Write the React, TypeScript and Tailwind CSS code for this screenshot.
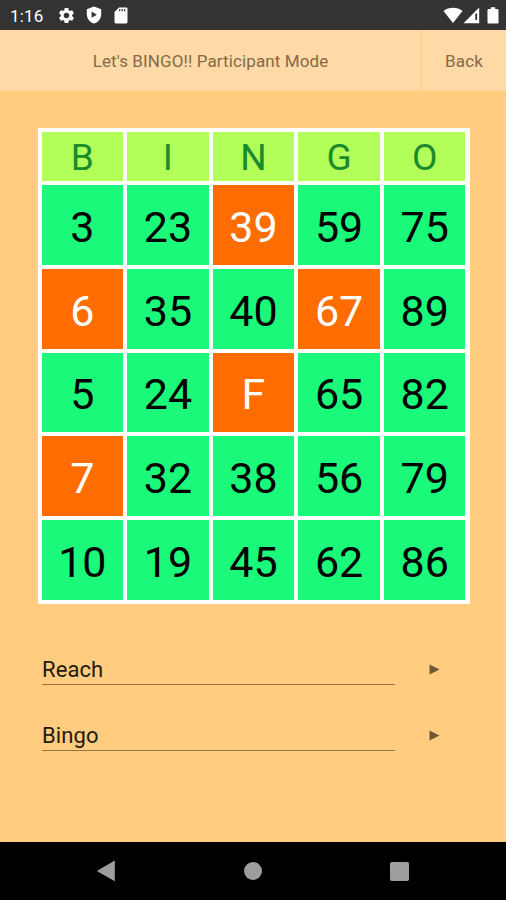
import React from "react";

type CellData = {
  label: string;
  hit?: boolean;
};

const HEADERS = ["B", "I", "N", "G", "O"];

const ROWS: CellData[][] = [
  [{ label: "3" }, { label: "23" }, { label: "39", hit: true }, { label: "59" }, { label: "75" }],
  [{ label: "6", hit: true }, { label: "35" }, { label: "40" }, { label: "67", hit: true }, { label: "89" }],
  [{ label: "5" }, { label: "24" }, { label: "F", hit: true }, { label: "65" }, { label: "82" }],
  [{ label: "7", hit: true }, { label: "32" }, { label: "38" }, { label: "56" }, { label: "79" }],
  [{ label: "10" }, { label: "19" }, { label: "45" }, { label: "62" }, { label: "86" }],
];

const StatusBar: React.FC = () => (
  <div className="h-[30px] shrink-0 bg-[#333333] flex items-center justify-between pl-[10px] pr-[7px] text-white">
    <div className="flex items-center">
      <span className="w-[47px] pt-[2px] text-[17px] leading-none tracking-[0.2px]">1:16</span>
      <svg className="w-[19px] h-[19px]" viewBox="0 0 24 24" fill="currentColor">
        <path d="M19.14 12.94c.04-.3.06-.61.06-.94 0-.32-.02-.64-.07-.94l2.03-1.58c.18-.14.23-.41.12-.61l-1.92-3.32c-.12-.22-.37-.29-.59-.22l-2.39.96c-.5-.38-1.03-.7-1.62-.94l-.36-2.54c-.04-.24-.24-.41-.48-.41h-3.84c-.24 0-.43.17-.47.41l-.36 2.54c-.59.24-1.13.57-1.62.94l-2.39-.96c-.22-.08-.47 0-.59.22L2.74 8.87c-.12.21-.08.47.12.61l2.03 1.58c-.05.3-.09.63-.09.94s.02.64.07.94l-2.03 1.58c-.18.14-.23.41-.12.61l1.92 3.32c.12.22.37.29.59.22l2.39-.96c.5.38 1.03.7 1.62.94l.36 2.54c.05.24.24.41.48.41h3.84c.24 0 .44-.17.47-.41l.36-2.54c.59-.24 1.13-.56 1.62-.94l2.39.96c.22.08.47 0 .59-.22l1.92-3.32c.12-.22.07-.47-.12-.61l-2.01-1.58zM12 15.6c-1.98 0-3.6-1.62-3.6-3.6s1.62-3.6 3.6-3.6 3.6 1.62 3.6 3.6-1.62 3.6-3.6 3.6z" />
      </svg>
      <svg className="w-[16px] h-[18px] ml-[10px]" viewBox="0 0 16 18">
        <path d="M8 0.5 15.2 3.2V8.2C15.2 12.5 12.3 16.2 8 17.6 3.7 16.2.8 12.5.8 8.2V3.2Z" fill="currentColor" />
        <path d="M5.6 5.6v6.2L10.9 8.7Z" fill="#333333" />
      </svg>
      <svg className="w-[14px] h-[17px] ml-[12px]" viewBox="0 0 14 17">
        <path d="M5 .5h7.3Q13.5.5 13.5 1.7v13.4q0 1.4-1.3 1.4H1.8Q.5 16.5.5 15.1V5Z" fill="currentColor" />
        <path d="M5.7 2v2.3M8.2 2v2.3M10.7 2v2.3" stroke="#333333" strokeWidth="1.2" />
      </svg>
    </div>
    <div className="flex items-center">
      <svg className="w-[20px] h-[17px]" viewBox="0 0 20 17">
        <path d="M.5 4C5.8-.2 14.2-.2 19.5 4L10 16Z" fill="currentColor" />
      </svg>
      <svg className="w-[17px] h-[17px]" viewBox="0 0 17 17">
        <path d="M.5 16.2 16.2.5v15.7Z" fill="currentColor" />
        <path d="M13.2 6.5v6.5" stroke="#333333" strokeWidth="1.8" />
      </svg>
      <svg className="w-[12px] h-[17px] ml-[7px]" viewBox="0 0 12 17">
        <path d="M3.8.3h4.4V2h2.1q1.2 0 1.2 1.2v12.2q0 1.2-1.2 1.2H1.7Q.5 16.6.5 15.4V3.2Q.5 2 1.7 2h2.1Z" fill="currentColor" />
      </svg>
    </div>
  </div>
);

const LogRow: React.FC<{ label: string }> = ({ label }) => (
  <div className="flex items-start h-[66px] pl-[42px]">
    <div className="w-[353px] h-[32px] border-b border-[#957549] text-[22px] leading-[34px] tracking-[0.1px] text-[#231b10]">
      {label}
    </div>
    <button className="ml-[34px] mt-[11px]" aria-label={label}>
      <svg className="w-[11px] h-[11px]" viewBox="0 0 11 11">
        <path d="M.5.5v10L10.5 5.5Z" fill="#6f5836" />
      </svg>
    </button>
  </div>
);

const NavBar: React.FC = () => (
  <div className="h-[58px] shrink-0 bg-black flex items-center justify-between pl-[96px] pr-[97px]">
    <svg className="w-[20px] h-[22px]" viewBox="0 0 20 22" fill="#9e9e9e">
      <path d="M18.8.5v20.8L.8 11Z" />
    </svg>
    <div className="w-[18px] h-[18px] rounded-full bg-[#9e9e9e]" />
    <div className="w-[19px] h-[19px] rounded-[2px] bg-[#9e9e9e]" />
  </div>
);

const App: React.FC = () => {
  return (
    <div className="w-[506px] h-[900px] flex flex-col overflow-hidden bg-[#ffcc80] font-['Roboto',sans-serif]">
      <StatusBar />
      <div className="h-[61px] shrink-0 flex bg-[#ffd9a6] text-[17px] text-[#846a48] border-b border-[#ffd194]">
        <div className="w-[421px] flex items-center justify-center pt-[4px] tracking-[0.1px]">
          Let's BINGO!! Participant Mode
        </div>
        <button className="flex-1 flex items-center justify-center pt-[4px] tracking-[0.1px] border-l border-[#ffcc80]">
          Back
        </button>
      </div>

      <div className="mt-[36.5px] ml-[37.5px] w-[432px] h-[476.5px] shrink-0 bg-white p-[4px] grid grid-cols-5 grid-rows-[49.5px_repeat(5,minmax(0,1fr))] gap-[4px]">
        {HEADERS.map((letter) => (
          <div
            key={letter}
            className="flex items-center justify-center pt-[3px] bg-[#b2ff59] text-[37px] leading-none text-[#1b8a2c]"
          >
            {letter}
          </div>
        ))}
        {ROWS.flat().map((cell) => (
          <div
            key={cell.label}
            className={`flex items-center justify-center pt-[5px] text-[43px] leading-none ${
              cell.hit ? "bg-[#ff6d00] text-white" : "bg-[#1bf97b] text-black"
            }`}
          >
            {cell.label}
          </div>
        ))}
      </div>

      <div className="flex-1 pt-[49px]">
        <LogRow label="Reach" />
        <LogRow label="Bingo" />
      </div>
      <NavBar />
    </div>
  );
};

export default App;
